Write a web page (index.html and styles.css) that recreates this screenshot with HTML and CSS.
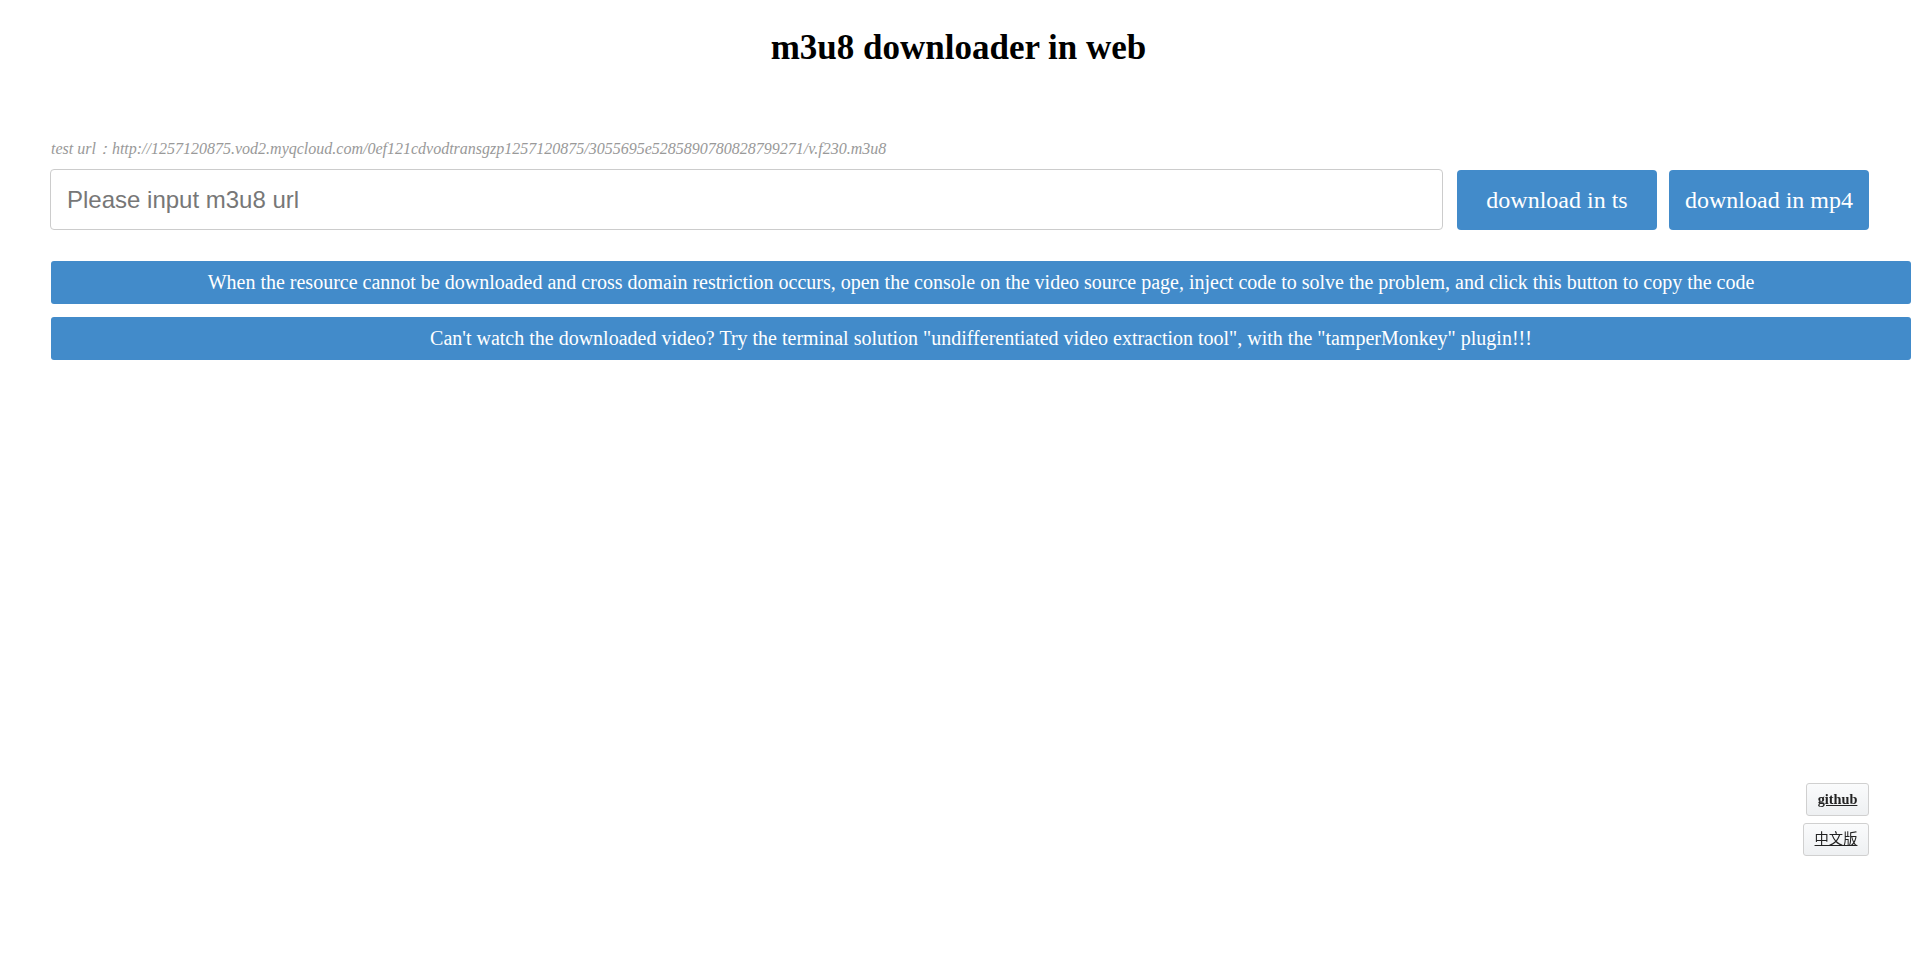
FILE: index.html
```html
<!DOCTYPE html>
<html lang="en">
<head>
<meta charset="utf-8">
<title>m3u8 downloader in web</title>
<link rel="stylesheet" href="styles.css">
</head>
<body>
<h1 class="title">m3u8 downloader in web</h1>
<main class="main">
  <p class="test-url">test url：http://1257120875.vod2.myqcloud.com/0ef121cdvodtransgzp1257120875/3055695e5285890780828799271/v.f230.m3u8</p>
  <div class="input-row">
    <input class="url-input" type="text" placeholder="Please input m3u8 url">
    <button class="btn btn-ts">download in ts</button>
    <button class="btn btn-mp4">download in mp4</button>
  </div>
  <button class="bar bar-first">When the resource cannot be downloaded and cross domain restriction occurs, open the console on the video source page, inject code to solve the problem, and click this button to copy the code</button>
  <button class="bar">Can't watch the downloaded video? Try the terminal solution "undifferentiated video extraction tool", with the "tamperMonkey" plugin!!!</button>
</main>
<div class="side-links">
  <a class="side-btn side-github" href="#">github</a>
  <a class="side-btn side-cn" href="#">中文版</a>
</div>
</body>
</html>
```
FILE: styles.css
```css
html, body {
  margin: 0;
  padding: 0;
  background: #fff;
}
body {
  font-family: "Liberation Serif", "Times New Roman", serif;
  color: #000;
}
.title {
  margin: 28px 0 0;
  font-size: 35px;
  font-weight: bold;
  text-align: center;
  line-height: normal;
}
.main {
  padding: 0 6px 0 51px;
}
.test-url {
  margin: 72px 0 0;
  font-style: italic;
  font-size: 16px;
  color: #999;
  line-height: 18px;
}
.input-row {
  display: flex;
  align-items: flex-start;
  margin: 11px 42px 0 -1px;
}
.url-input {
  flex: 1;
  height: 61px;
  box-sizing: border-box;
  border: 1px solid #ccc;
  border-radius: 4px;
  padding: 0 16px;
  font-family: "Liberation Sans", Arial, sans-serif;
  font-size: 24px;
  color: #555;
  outline: none;
  margin: 0;
}
.url-input::placeholder {
  color: #777;
}
.btn {
  width: 200px;
  height: 60px;
  margin: 1px 0 0 12px;
  border: none;
  border-radius: 4px;
  background: #428bca;
  color: #fff;
  font-family: "Liberation Serif", "Times New Roman", serif;
  font-size: 24px;
  padding: 0;
  cursor: pointer;
}
.btn-ts {
  margin-left: 14px;
}
.bar {
  display: block;
  width: 100%;
  height: 43px;
  margin: 13px 0 0;
  border: none;
  border-radius: 3px;
  background: #428bca;
  color: #fff;
  font-family: "Liberation Serif", "Times New Roman", serif;
  font-size: 20px;
  text-align: center;
  padding: 0;
  cursor: pointer;
}
.bar-first {
  margin-top: 31px;
}
.side-links {
  position: fixed;
  right: 48px;
  top: 783px;
  display: flex;
  flex-direction: column;
  align-items: flex-end;
  gap: 7px;
}
.side-btn {
  display: block;
  height: 33px;
  box-sizing: border-box;
  line-height: 31px;
  border: 1px solid #d0d0d0;
  border-radius: 3px;
  background: linear-gradient(#fafbfc, #eef0f2);
  color: #222;
  text-decoration: underline;
  font-size: 14.3px;
}
.side-github {
  width: 63px;
  text-align: center;
  font-weight: bold;
  font-family: "Liberation Serif", "Times New Roman", serif;
}
.side-cn {
  width: 66px;
  text-align: center;
  font-family: "Liberation Serif", "Noto Sans CJK SC", serif;
}
```
